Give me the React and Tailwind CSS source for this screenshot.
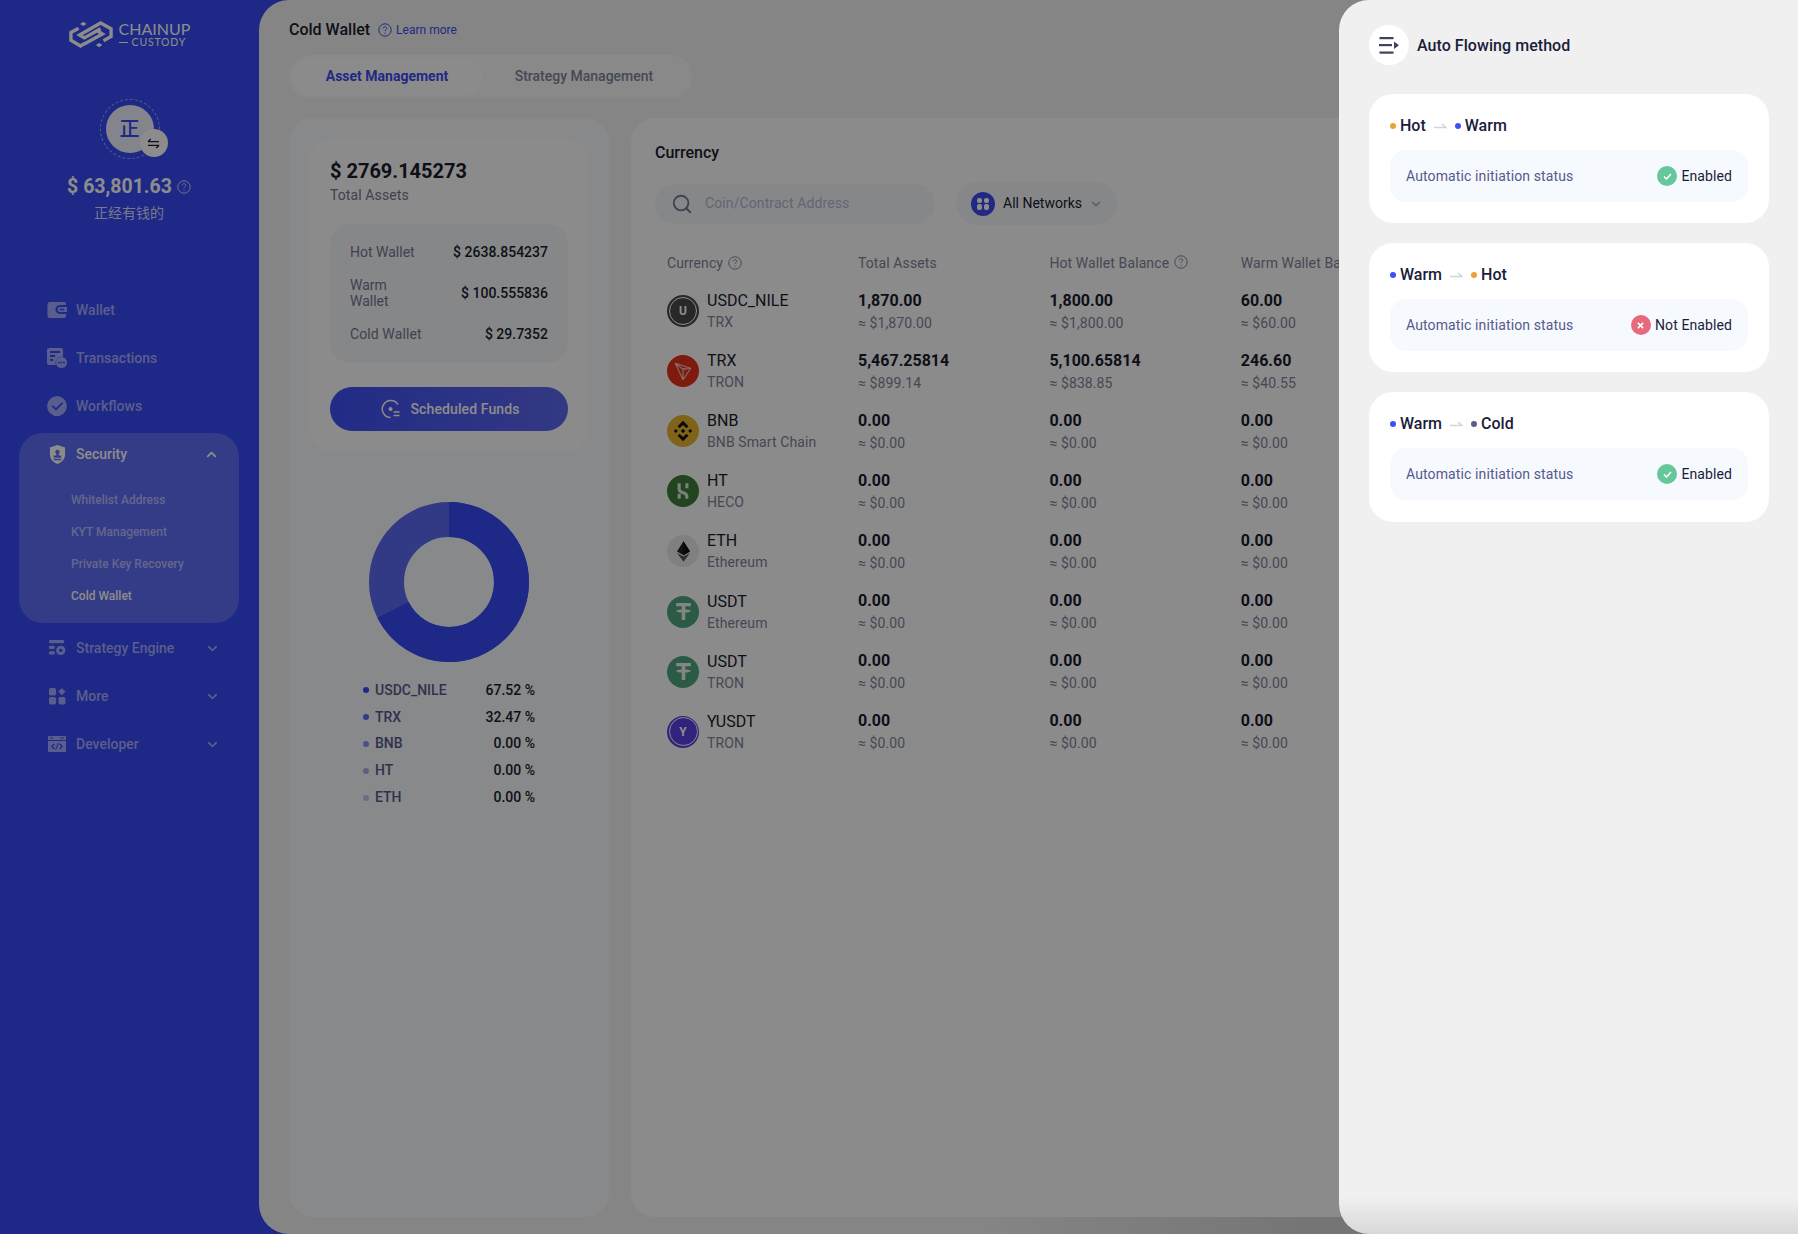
import React from "react";
import { ChevronDown, ChevronUp, Search } from "lucide-react";

const Q = ({ cls = "" }) => (
  <svg viewBox="0 0 14 14" className={cls} fill="none" stroke="currentColor">
    <circle cx="7" cy="7" r="6.2" strokeWidth="1" />
    <path d="M5.2 5.4c0-1 .8-1.7 1.8-1.7s1.8.7 1.8 1.6c0 1.3-1.8 1.4-1.8 2.8" strokeWidth="1" />
    <circle cx="7" cy="10.2" r=".6" fill="currentColor" stroke="none" />
  </svg>
);

const WalletIcon = () => (
  <svg viewBox="0 0 20 18" className="w-5 h-[18px]" fill="currentColor">
    <path fillRule="evenodd" d="M3 1h14a2 2 0 0 1 2 2v1h-6a4.500 4.500 0 0 0 0 9h6v1.500a2.500 2.500 0 0 1-2.500 2.500H3a2.500 2.500 0 0 1-2.500-2.500V3.500A2.500 2.500 0 0 1 3 1z" />
    <path fillRule="evenodd" d="M13 6h7v5h-7a2.500 2.500 0 0 1 0-5zm.5 1.700a.8.8 0 1 0 0 1.600h3a.8.8 0 1 0 0-1.600z" />
  </svg>
);
const TxIcon = () => (
  <svg viewBox="0 0 20 20" className="w-5 h-5" fill="currentColor">
    <path fillRule="evenodd" d="M2 0h12a2 2 0 0 1 2 2v7a6 6 0 0 0-7 8H2a2 2 0 0 1-2-2V2a2 2 0 0 1 2-2zm1 3v2h10V3zm0 4v2h5V7zm0 4v2h3v-2z" />
    <circle cx="14.500" cy="14.500" r="5.500" />
    <g fill="#3749f4"><circle cx="12" cy="14.500" r=".9" /><circle cx="14.500" cy="14.500" r=".9" /><circle cx="17" cy="14.500" r=".9" /></g>
  </svg>
);
const FlowIcon = () => (
  <svg viewBox="0 0 20 20" className="w-5 h-5" fill="currentColor">
    <path fillRule="evenodd" d="M10 0a10 10 0 0 1 3 19.500V20H7v-.5A10 10 0 0 1 10 0zm4.800 6.300L9 12 5.800 9.200 4.600 10.500 9 14.600l7-7z" />
  </svg>
);
const ShieldIcon = () => (
  <svg viewBox="0 0 18 20" className="w-[17px] h-[19px]" fill="currentColor">
    <path fillRule="evenodd" d="M9 0l8 2.500V10c0 5-3.500 8.500-8 10-4.500-1.500-8-5-8-10V2.500zM9 5a2.300 2.300 0 0 0-1.300 4.200V11H5v2.500h8V11h-2.700V9.200A2.300 2.300 0 0 0 9 5zM5 14.500V16h8v-1.500z" />
  </svg>
);
const EngineIcon = () => (
  <svg viewBox="0 0 18 17" className="w-[17px] h-4" fill="currentColor">
    <rect width="16" height="3.500" rx="1" />
    <rect y="6" width="6" height="3.500" rx="1" />
    <rect y="12" width="6" height="3.500" rx="1" />
    <path fillRule="evenodd" d="M12.500 6a5 5 0 1 1 0 10 5 5 0 0 1 0-10zm0 3.200a1.800 1.800 0 1 0 0 3.600 1.800 1.800 0 0 0 0-3.600z" />
  </svg>
);
const MoreIcon = () => (
  <svg viewBox="0 0 17 17" className="w-[17px] h-[17px]" fill="currentColor">
    <rect width="7" height="7.500" rx="1.800" />
    <path d="M12.900.3l3.600 3.300-3.600 3.600-3.600-3.600z" />
    <rect y="9" width="7" height="7.500" rx="1.800" />
    <rect x="9.500" y="9" width="7" height="7.500" rx="1.800" />
  </svg>
);
const DevIcon = () => (
  <svg viewBox="0 0 18 16" className="w-[18px] h-4" fill="currentColor">
    <path fillRule="evenodd" d="M1 0h16a1 1 0 0 1 1 1v3H0V1a1 1 0 0 1 1-1zm1 1.500v1h3v-1zm10 0v1h4v-1z" />
    <path fillRule="evenodd" d="M0 5h18v10a1 1 0 0 1-1 1H1a1 1 0 0 1-1-1zm5.800 2.500L3 10.500l2.800 3 .9-.9-1.900-2.100 1.900-2.100zm6.400 0l-.9.900 1.900 2.100-1.900 2.100.9.900 2.800-3zM10 7l-3 7h1l3-7z" />
  </svg>
);

const Logo = () => (
  <div className="flex items-center gap-[6px] h-[28px] text-[#ffffff]">
    <svg viewBox="0 0 46 28" className="w-[44px] h-[27px]" fill="none" stroke="currentColor">
      <path d="M10 7.500L2 12v8l10 6 5-3" strokeWidth="3.500" strokeLinejoin="miter" />
      <path d="M36 20.500L44 16V8L33 2 11 14.500l5 3L33 8" strokeWidth="3.500" strokeLinejoin="miter" />
      <path d="M30 10.500l5 3L16 24" strokeWidth="3.500" />
      <path d="M11.500 3l3.500-2.200L18.500 3 15 5.200zM28 25l3.500-2.200L35 25l-3.500 2.200z" fill="currentColor" stroke="none" />
    </svg>
    <div className="flex flex-col" style={{ fontFamily: "Lato, sans-serif" }}>
      <span className="text-[16px] leading-[17px] font-normal">CHAINUP</span>
      <span className="text-[10.500px] leading-[11px] tracking-[0.8px] flex items-center gap-[4px]">
        <span className="w-[9px] h-px bg-white inline-block" />CUSTODY
      </span>
    </div>
  </div>
);

const NavItem = ({ icon, label, chevron, active }) => (
  <div className={`flex items-center h-[48px] pl-[47px] pr-[39px] text-[14px] font-medium ${active ? "text-white" : "text-[#a4abff]"}`}>
    <span className="w-[20px] flex justify-center mr-[9px]">{icon}</span>
    <span className="flex-1">{label}</span>
    {chevron === "down" && <ChevronDown className="w-[15px] h-[15px]" strokeWidth={2.500} />}
    {chevron === "up" && <ChevronUp className="w-[15px] h-[15px]" strokeWidth={3} />}
  </div>
);

const Sidebar = () => (
  <aside className="w-[259px] shrink-0 flex flex-col pt-[20px]">
    <div className="flex justify-center"><Logo /></div>
    <div className="relative w-[60px] h-[60px] mx-auto mt-[51px] rounded-full border border-dashed border-[#a4abff] flex items-center justify-center">
      <div className="w-[48px] h-[48px] rounded-full bg-[#eef0ff] text-[#3749f4] flex items-center justify-center text-[20px] font-medium">正</div>
      <div className="absolute left-[39px] top-[29px] w-[28px] h-[28px] rounded-full bg-white flex items-center justify-center text-[#1a1c3a]">
        <svg viewBox="0 0 14 12" className="w-[13px] h-[11px]" fill="none" stroke="currentColor" strokeWidth="1.500">
          <path d="M1 4h12M1 4l3-3" /><path d="M13 8H1m12 0l-3 3" />
        </svg>
      </div>
    </div>
    <div className="mt-[14px] flex items-center justify-center gap-[5px] text-white pr-[1px]">
      <span className="text-[19.500px] leading-[28px] font-bold">$ 63,801.63</span>
      <Q cls="w-[14px] h-[14px] text-[#d0d2f8]" />
    </div>
    <div className="text-[14px] leading-[22px] text-[#d8dbff] text-center mt-[1px] pr-[1px]">正经有钱的</div>

    <div className="mt-[62px] flex flex-col">
      <NavItem icon={<WalletIcon />} label="Wallet" />
      <NavItem icon={<TxIcon />} label="Transactions" />
      <NavItem icon={<FlowIcon />} label="Workflows" />
      <div className="mx-[19px] w-[220px] h-[190px] rounded-[24px] bg-[#5f6df6] mt-[3px]">
        <div className="-mx-[19px] -mt-[3px]">
          <NavItem icon={<ShieldIcon />} label="Security" chevron="up" active />
        </div>
        <div className="pl-[52px] pt-[6px] flex flex-col text-[12px] font-medium">
          <span className="h-[32px] leading-[32px] text-[#b5bcff]">Whitelist Address</span>
          <span className="h-[32px] leading-[32px] text-[#b5bcff]">KYT Management</span>
          <span className="h-[32px] leading-[32px] text-[#b5bcff]">Private Key Recovery</span>
          <span className="h-[32px] leading-[32px] text-white">Cold Wallet</span>
        </div>
      </div>
      <div className="mt-[1px]">
        <NavItem icon={<EngineIcon />} label="Strategy Engine" chevron="down" />
        <NavItem icon={<MoreIcon />} label="More" chevron="down" />
        <NavItem icon={<DevIcon />} label="Developer" chevron="down" />
      </div>
    </div>
  </aside>
);

const legend = [
  ["USDC_NILE", "67.52 %", "bg-[#3749f4]"],
  ["TRX", "32.47 %", "bg-[#5d6cf6]"],
  ["BNB", "0.00 %", "bg-[#8491f8]"],
  ["HT", "0.00 %", "bg-[#a5aef0]"],
  ["ETH", "0.00 %", "bg-[#c0c5ee]"],
];

const Donut = () => (
  <svg viewBox="0 0 160 160" className="w-[160px] h-[160px] mx-auto block">
    <circle cx="80" cy="80" r="62.500" fill="none" stroke="#5d6af3" strokeWidth="35" />
    <circle cx="80" cy="80" r="62.500" fill="none" stroke="#3749f4" strokeWidth="35" strokeDasharray="265.150 392.700" transform="rotate(-90 80 80)" />
  </svg>
);

const LeftPanel = () => (
  <div className="w-[320px] shrink-0 rounded-[24px] bg-[#f7f9fc] px-[20px] pt-[20px]">
    <div className="rounded-[24px] bg-[#fdfdfe] h-[314px] px-[21px] pt-[20px] flex flex-col">
      <div className="text-[20px] leading-[26px] font-bold text-[#1a1c2e]">$ 2769.145273</div>
      <div className="text-[14px] leading-[20px] text-[#74778f] mt-[1px] tracking-[0.1px]">Total Assets</div>
      <div className="mt-[19px] rounded-[20px] bg-[#f5f6fa] h-[139px] px-[20px] pt-[10px] text-[14px]">
        <div className="h-[36px] flex items-center justify-between">
          <span className="text-[#74778f]">Hot Wallet</span>
          <span className="font-medium text-[#1a1c2e]">$ 2638.854237</span>
        </div>
        <div className="h-[46px] flex items-center justify-between">
          <span className="text-[#74778f] leading-[16px] w-[50px]">Warm Wallet</span>
          <span className="font-medium text-[#1a1c2e]">$ 100.555836</span>
        </div>
        <div className="h-[36px] flex items-center justify-between">
          <span className="text-[#74778f] tracking-[0.1px]">Cold Wallet</span>
          <span className="font-medium text-[#1a1c2e]">$ 29.7352</span>
        </div>
      </div>
      <div className="mt-[24px] h-[44px] pl-[2px] rounded-full bg-gradient-to-r from-[#3e4ff5] to-[#5f67ee] flex items-center justify-center gap-[10px] text-white text-[14px] font-medium">
        <svg viewBox="0 0 20 20" className="w-[20px] h-[20px]" fill="none" stroke="currentColor" strokeWidth="1.500">
          <path d="M17 5.500A8.500 8.500 0 1 0 9.500 18.500" />
          <circle cx="9.500" cy="10" r="2" fill="currentColor" stroke="none" />
          <path d="M12.500 13h6M12.500 16.500h6" />
        </svg>
        <span className="tracking-[0.1px]">Scheduled Funds</span>
      </div>
    </div>
    <div className="mt-[50px]"><Donut /></div>
    <div className="mt-[15px] pl-[54px] pr-[54px] flex flex-col">
      {legend.map(([n, v, c]) => (
        <div key={n} className="h-[26.800px] flex items-center justify-between text-[14px] font-medium">
          <span className="flex items-center text-[#575b8f]">
            <span className={`w-[6px] h-[6px] rounded-full mr-[6px] ${c}`} />{n}
          </span>
          <span className="text-[#1a1c2e]">{v}</span>
        </div>
      ))}
    </div>
  </div>
);

const CoinU = () => (
  <div className="w-[32px] h-[32px] rounded-full bg-[#4a4a4a] flex items-center justify-center relative text-white text-[12px] font-bold">
    <span className="absolute inset-[2px] rounded-full border border-white" />U
  </div>
);
const CoinTrx = () => (
  <div className="w-[32px] h-[32px] rounded-full bg-[#e8301c] flex items-center justify-center">
    <svg viewBox="0 0 20 20" className="w-[22px] h-[22px]" fill="none" stroke="#f3c8c0" strokeWidth="1" strokeLinejoin="round">
      <path d="M3 3l14 4.500-7 10.500zM3 3l7 5.500 1.500-1M10 8.500V18M10 8.500l7-1" />
    </svg>
  </div>
);
const CoinBnb = () => (
  <div className="w-[32px] h-[32px] rounded-full bg-[#e8b52e] flex items-center justify-center">
    <svg viewBox="0 0 20 20" className="w-[24px] h-[24px]" fill="#111">
      <path d="M10 1.500l4.500 4.500-1.700 1.700L10 4.900 7.200 7.700 5.500 6z" />
      <path d="M10 18.500L14.500 14l-1.700-1.700L10 15.100l-2.800-2.800L5.500 14z" />
      <path d="M2.300 10L4 8.300 5.700 10 4 11.700zM14.300 10L16 8.300 17.700 10 16 11.700zM8.200 10L10 8.200 11.800 10 10 11.800z" />
    </svg>
  </div>
);
const CoinHt = () => (
  <div className="w-[32px] h-[32px] rounded-full bg-[#3f7d38] flex items-center justify-center">
    <svg viewBox="0 0 20 20" className="w-[22px] h-[22px]" fill="none" stroke="#e4ebe2" strokeWidth="2.800">
      <path d="M6.500 3v5.500c0 1.500 1 2.300 3.500 3s3.500 1.500 3.500 3V17" />
      <path d="M13.500 3v4.500" />
      <path d="M6.500 12.500V17" />
    </svg>
  </div>
);
const CoinEth = () => (
  <div className="w-[32px] h-[32px] rounded-full bg-[#e9e9ee] flex items-center justify-center">
    <svg viewBox="0 0 14 22" className="w-[13px] h-[21px]">
      <path d="M7 0L0 11l7 4 7-4z" fill="#222" />
      <path d="M7 0v15l7-4z" fill="#111" />
      <path d="M0 12.500L7 22l7-9.500-7 4z" fill="#555" />
    </svg>
  </div>
);
const CoinUsdt = () => (
  <div className="w-[32px] h-[32px] rounded-full bg-[#4fa77f] flex items-center justify-center">
    <svg viewBox="0 0 20 20" className="w-[21px] h-[21px]" fill="#f0f5f2">
      <path d="M3 2h14v3h-5.300v3c2.800.1 5.300.7 5.300 1.500s-2.500 1.400-5.300 1.500v7H8.300v-7C5.500 10.900 3 10.300 3 9.500S5.500 8.100 8.300 8V5H3z" />
    </svg>
  </div>
);
const CoinY = () => (
  <div className="w-[32px] h-[32px] rounded-full bg-[#5a3ee0] flex items-center justify-center relative text-white text-[12px] font-bold">
    <span className="absolute inset-[1.500px] rounded-full border border-white" />Y
  </div>
);

const rows = [
  [<CoinU />, "USDC_NILE", "TRX", "1,870.00", "≈ $1,870.00", "1,800.00", "≈ $1,800.00", "60.00", "≈ $60.00"],
  [<CoinTrx />, "TRX", "TRON", "5,467.25814", "≈ $899.14", "5,100.65814", "≈ $838.85", "246.60", "≈ $40.55"],
  [<CoinBnb />, "BNB", "BNB Smart Chain", "0.00", "≈ $0.00", "0.00", "≈ $0.00", "0.00", "≈ $0.00"],
  [<CoinHt />, "HT", "HECO", "0.00", "≈ $0.00", "0.00", "≈ $0.00", "0.00", "≈ $0.00"],
  [<CoinEth />, "ETH", "Ethereum", "0.00", "≈ $0.00", "0.00", "≈ $0.00", "0.00", "≈ $0.00"],
  [<CoinUsdt />, "USDT", "Ethereum", "0.00", "≈ $0.00", "0.00", "≈ $0.00", "0.00", "≈ $0.00"],
  [<CoinUsdt />, "USDT", "TRON", "0.00", "≈ $0.00", "0.00", "≈ $0.00", "0.00", "≈ $0.00"],
  [<CoinY />, "YUSDT", "TRON", "0.00", "≈ $0.00", "0.00", "≈ $0.00", "0.00", "≈ $0.00"],
];

const Val = ({ a, b }) => (
  <div className="w-[191.400px] shrink-0">
    <div className="text-[16px] leading-[22px] font-bold text-[#1a1c2e]">{a}</div>
    <div className="text-[14px] leading-[20px] text-[#80839a] mt-[1px] tracking-[0.1px]">{b}</div>
  </div>
);

const RightPanel = () => (
  <div className="w-[1200px] shrink-0 rounded-[24px] bg-[#fdfdfd] pl-[24px] pt-[24px]">
    <div className="text-[16px] leading-[22px] font-medium text-[#1a1c2e]">Currency</div>
    <div className="mt-[18px] flex items-center gap-[21px]">
      <div className="w-[280px] h-[40px] rounded-full bg-[#f5f6fa] flex items-center pl-[16px] text-[14px] text-[#b4b9d2] tracking-[0.1px]">
        <Search className="w-[22px] h-[22px] text-[#74778f] mr-[12px]" strokeWidth={2} />
        Coin/Contract Address
      </div>
      <div className="w-[161px] h-[43px] rounded-full bg-[#f5f6fa] flex items-center pl-[15px] text-[14px] text-[#1a1c2e]">
        <span className="w-[24px] h-[24px] rounded-full bg-[#3f4cf0] grid grid-cols-2 gap-[1.500px] p-[6px] mr-[8px]">
          <span className="bg-white rounded-[2px]" /><span className="bg-white rounded-[2px]" />
          <span className="bg-white rounded-[2px]" /><span className="bg-white rounded-[2px]" />
        </span>
        All Networks
        <ChevronDown className="w-[14px] h-[14px] text-[#9a9db0] ml-[7px]" />
      </div>
    </div>
    <div className="mt-[26px] pl-[12px]">
      <div className="flex items-center h-[24px] text-[14px] text-[#80839a] tracking-[0.1px]">
        <div className="w-[191px] flex items-center gap-[5px]">Currency<Q cls="w-[14px] h-[14px]" /></div>
        <div className="w-[191.400px]">Total Assets</div>
        <div className="w-[191.400px] flex items-center gap-[5px]">Hot Wallet Balance<Q cls="w-[14px] h-[14px] -mt-[3px]" /></div>
        <div className="w-[191.400px] whitespace-nowrap">Warm Wallet Balance</div>
      </div>
      <div className="mt-[6px] flex flex-col">
        {rows.map((r, i) => (
          <div key={i} className="h-[60.100px] flex items-center">
            <div className="w-[191px] shrink-0 flex items-center gap-[8px]">
              {r[0]}
              <div>
                <div className="text-[16px] leading-[22px] text-[#1a1c2e]">{r[1]}</div>
                <div className="text-[14px] leading-[20px] text-[#80839a] tracking-[0.1px]">{r[2]}</div>
              </div>
            </div>
            <Val a={r[3]} b={r[4]} />
            <Val a={r[5]} b={r[6]} />
            <Val a={r[7]} b={r[8]} />
          </div>
        ))}
      </div>
    </div>
  </div>
);

const Arrow = () => (
  <svg viewBox="0 0 13 6" className="w-[13px] h-[6px] mx-[8px]" fill="none" stroke="#d2d4dc" strokeWidth="1.500">
    <path d="M0 4.500h12L8 1" />
  </svg>
);
const Dot = ({ c }) => <span className={`w-[6px] h-[6px] rounded-full mr-[4px] ${c}`} />;

const Status = ({ ok }) => (
  <div className="flex items-center gap-[4px] text-[14px] text-[#1a1c3a] tracking-[0.1px]">
    <span className={`w-[20px] h-[20px] rounded-full flex items-center justify-center ${ok ? "bg-[#66c79c]" : "bg-[#e76a7c]"}`}>
      {ok ? (
        <svg viewBox="0 0 10 8" className="w-[9px] h-[7px]" fill="none" stroke="#fff" strokeWidth="1.800"><path d="M1 4l2.800 2.800L9 1.200" /></svg>
      ) : (
        <svg viewBox="0 0 8 8" className="w-[7px] h-[7px]" fill="none" stroke="#fff" strokeWidth="1.800"><path d="M1 1l6 6M7 1L1 7" /></svg>
      )}
    </span>
    {ok ? "Enabled" : "Not Enabled"}
  </div>
);

const FlowCard = ({ from, fromC, to, toC, ok, last }) => (
  <div className={`rounded-[24px] bg-white px-[21px] pt-[22px] ${last ? "h-[130px]" : "h-[129px]"}`}>
    <div className="flex items-center h-[20px] text-[16px] font-medium text-[#1a1c3a]">
      <Dot c={fromC} />{from}<Arrow /><Dot c={toC} />{to}
    </div>
    <div className="mt-[14px] h-[52px] rounded-[16px] bg-[#f6f9fe] flex items-center justify-between px-[16px]">
      <span className="text-[14px] text-[#55598a] tracking-[0.12px]">Automatic initiation status</span>
      <Status ok={ok} />
    </div>
  </div>
);

const Drawer = () => (
  <div className="absolute right-0 top-0 bottom-0 w-[459px] rounded-l-[30px] bg-gradient-to-b from-[#f0f0f0] from-[97%] to-[#d8d8d8] pl-[30px] pr-[29px] pt-[25px]">
    <div className="flex items-center gap-[8px] h-[40px]">
      <div className="w-[40px] h-[40px] rounded-full bg-white flex items-center justify-center">
        <svg viewBox="0 0 20 17" className="w-[20px] h-[17px]" fill="#3f4260">
          <rect x="0.500" y="0" width="14" height="2.200" />
          <rect x="0" y="7" width="13" height="2.200" />
          <rect x="0.500" y="14.500" width="14" height="2.200" />
          <path d="M15 4.500l5 3.800-5 3.800z" />
        </svg>
      </div>
      <span className="text-[16px] leading-[24px] font-medium text-[#1a1c3a] tracking-[0.05px] relative top-[1px]">Auto Flowing method</span>
    </div>
    <div className="mt-[29px] flex flex-col gap-[20px]">
      <FlowCard from="Hot" fromC="bg-[#ef9f38]" to="Warm" toC="bg-[#3f50f5]" ok />
      <FlowCard from="Warm" fromC="bg-[#3f50f5]" to="Hot" toC="bg-[#ef9f38]" ok={false} />
      <FlowCard from="Warm" fromC="bg-[#3f50f5]" to="Cold" toC="bg-[#5a5e8c]" ok last />
    </div>
  </div>
);

export default function App() {
  return (
    <div className="relative w-[1798px] h-[1234px] overflow-hidden flex bg-[#3749f4]" style={{ fontFamily: "Roboto, 'Noto Sans CJK SC', sans-serif" }}>
      <Sidebar />
      <main className="relative flex-1 min-w-0 rounded-l-[30px] bg-[#f2f2f2] pl-[30px] pt-[18px] pb-[17px] flex flex-col overflow-hidden">
        <div className="flex items-center h-[24px]">
          <span className="text-[16px] font-medium text-[#1a1c2e]">Cold Wallet</span>
          <Q cls="w-[14px] h-[14px] text-[#3f4cf0] ml-[8px]" />
          <span className="text-[12px] text-[#3f4cf0] ml-[4px]">Learn more</span>
        </div>
        <div className="mt-[13px] w-[403px] h-[43px] rounded-full bg-[#f9fafb] flex items-center p-[3px] text-[14px] font-medium">
          <div className="w-[190px] h-[37px] rounded-full bg-[#fdfdfe] text-[#3f4cf0] font-bold flex items-center justify-center">Asset Management</div>
          <div className="w-[204px] text-center text-[#80839a]">Strategy Management</div>
        </div>
        <div className="mt-[20px] flex-1 flex gap-[22px] min-h-0">
          <LeftPanel />
          <RightPanel />
        </div>
        <div className="absolute left-[721px] right-0 bottom-0 h-[17px] bg-gradient-to-r from-transparent to-[#d6d6d6] to-[40%]" />
      </main>
      <div className="absolute inset-0 bg-black/45" />
      <Drawer />
    </div>
  );
}
